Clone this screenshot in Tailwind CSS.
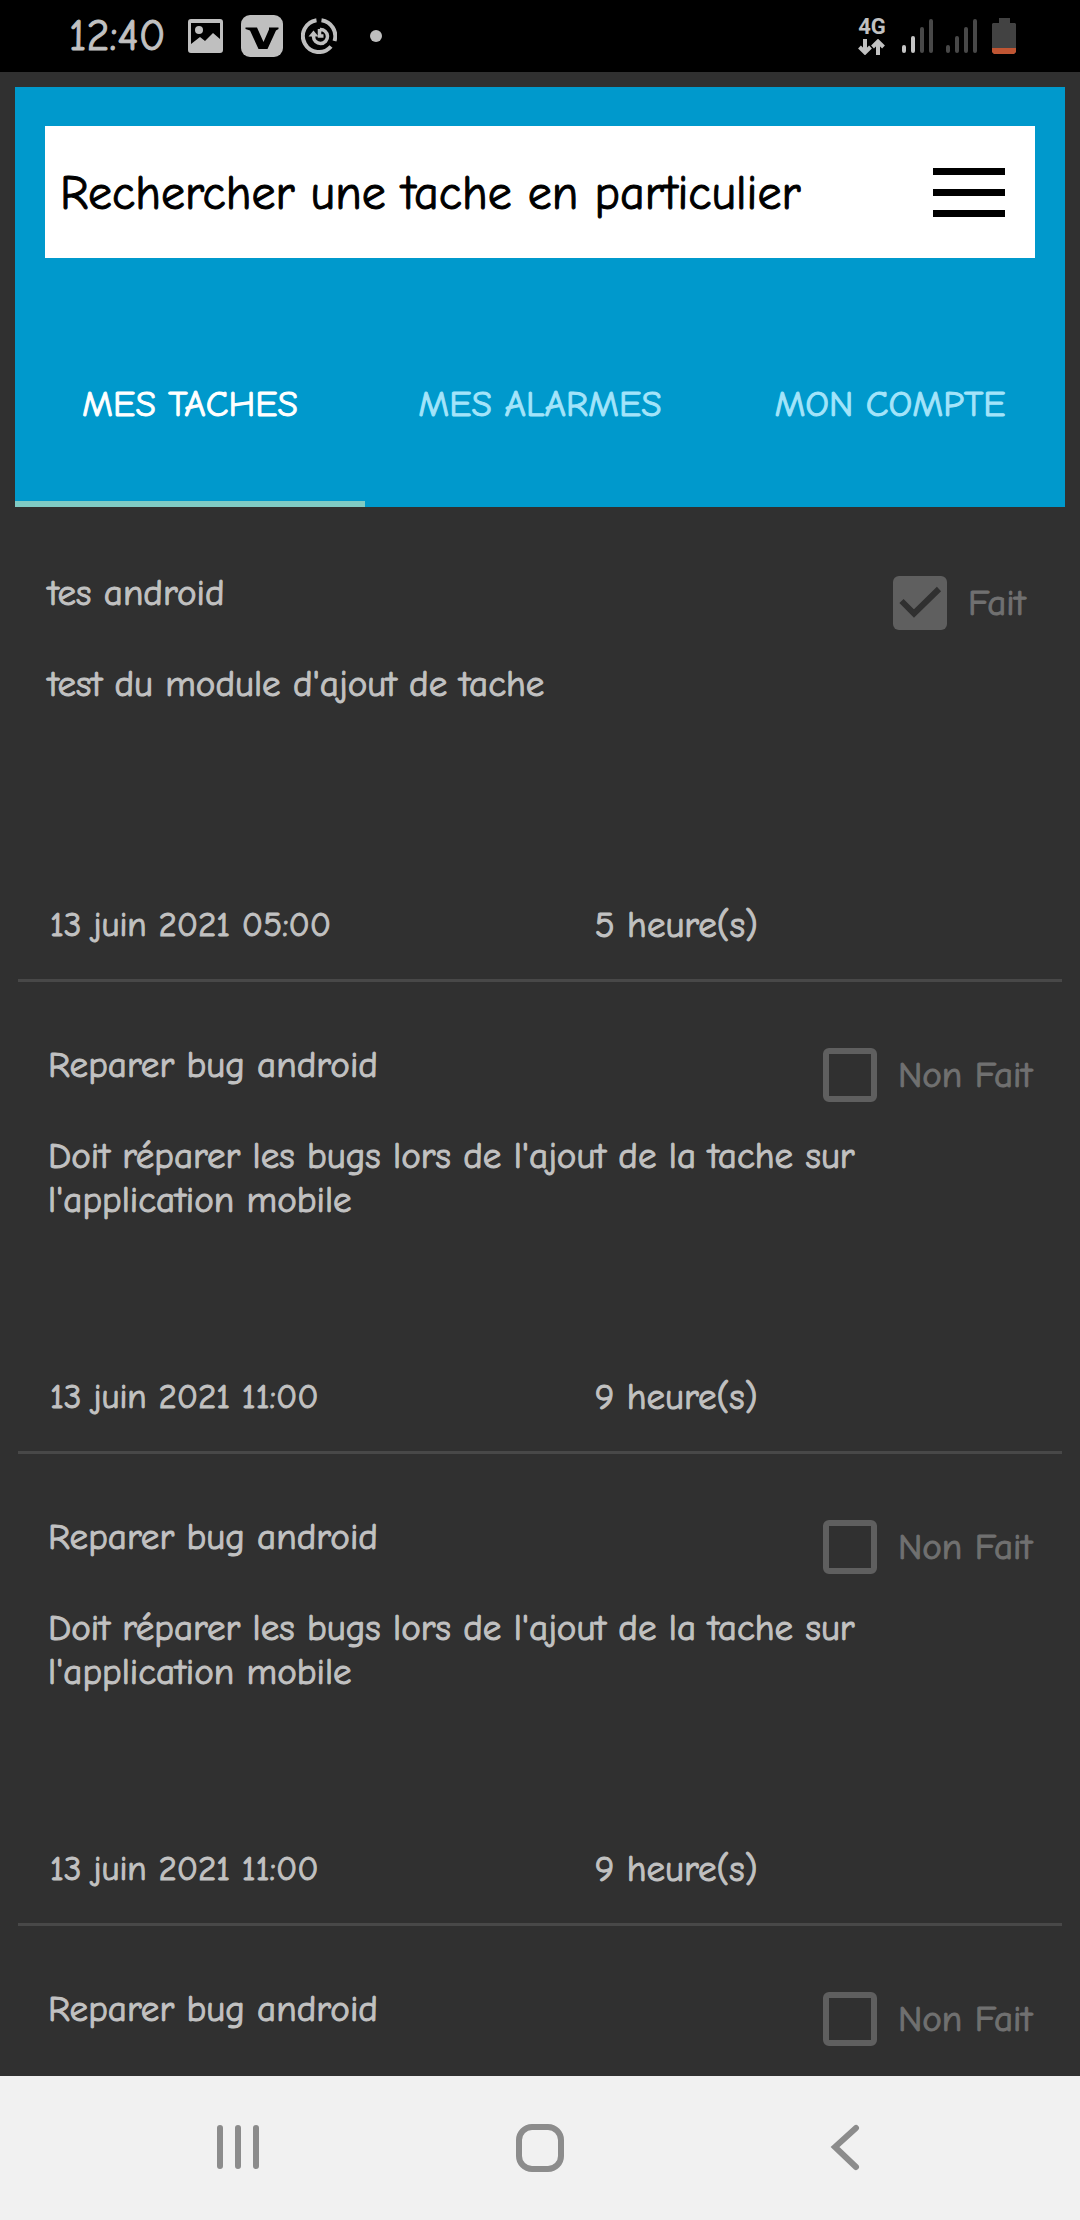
<!DOCTYPE html>
<html lang="fr">
<head>
<meta charset="utf-8">
<meta name="viewport" content="width=device-width, initial-scale=1">
<title>Mes taches</title>
<script src="https://cdn.jsdelivr.net/npm/@tailwindcss/browser@4"></script>
</head>
<body class="flex h-screen flex-col overflow-hidden bg-[#303030] font-['Comic_Neue',Lato,sans-serif] text-[37px] leading-[44px] text-[#c1c1c1] [-webkit-text-stroke-width:1px]">

<!-- Status bar -->
<div class="flex h-[72px] shrink-0 items-center justify-between bg-black pr-16 pl-[69px]">
  <div class="flex items-center">
    <span class="mr-[22px] text-[44px]">12:40</span>
    <svg class="mr-[18px] h-[34px] w-[35px]" viewBox="0 0 35 34"><path fill="#bfbfbf" fill-rule="evenodd" d="M3 0h29a3 3 0 0 1 3 3v28a3 3 0 0 1-3 3H3a3 3 0 0 1-3-3V3a3 3 0 0 1 3-3zM3 4v21l9-7 5 4 8-8 7 6V4z"/><circle cx="11" cy="11" r="4" fill="#bfbfbf"/></svg>
    <svg class="mr-[18px] size-[42px]" viewBox="0 0 42 42"><rect width="42" height="42" rx="9" fill="#bfbfbf"/><path d="M4.500 12.500H16L22.500 27 28 14.500V12.500H37.500V14L35 15.500 26.500 34H17.500L9 15.500 4.500 14z" fill="#000"/></svg>
    <svg class="size-9" viewBox="0 0 36 36" fill="none" stroke="#bfbfbf"><path stroke-width="4" d="M15.500 2.200A16 16 0 1 0 30 28.500M20.500 2.200A16 16 0 0 1 33.500 23"/><path stroke-width="3.500" d="M19 11.500a7 7 0 1 1-6.500 7v-2M18.500 11v7h4"/><path fill="#bfbfbf" stroke="none" d="M7.500 18.500l5-6 5 6z"/></svg>
    <span class="ml-[33px] size-3 rounded-full bg-[#bfbfbf]"></span>
  </div>
  <div class="flex items-center">
    <div class="mr-4 flex flex-col items-center">
      <span class="font-[Roboto] text-[22px] leading-5 font-bold [-webkit-text-stroke-width:0px]">4G</span>
      <svg class="mt-0.5 h-4 w-7" viewBox="0 0 28 16" fill="none" stroke="#c1c1c1" stroke-width="4"><path d="M7 0v13M1.500 8L7 13.500 12.500 8M20 16V3M14.500 8L20 2.500 25.500 8"/></svg>
    </div>
    <svg class="mr-3 h-[34px] w-8" viewBox="0 0 32 34" stroke-width="4" stroke-linecap="round"><path stroke="#c4c4c4" d="M2 28v4M11 19v13"/><path stroke="#484848" d="M20 10v22M29 2v30"/></svg>
    <svg class="mr-3.5 h-[34px] w-8" viewBox="0 0 32 34" stroke="#484848" stroke-width="4" stroke-linecap="round"><path d="M2 28v4M11 19v13M20 10v22M29 2v30"/></svg>
    <svg class="h-9 w-6" viewBox="0 0 24 36"><path fill="#424242" d="M7 0h11v5h5l1 1v28l-2 2H2l-2-2V6l1-1h6z"/><path fill="#bf5533" d="M0 30h24v4l-2 2H2l-2-2z"/></svg>
  </div>
</div>

<!-- Search and tabs -->
<header class="mx-[15px] mt-[15px] shrink-0 bg-[#0099cc] pt-[39px]">
  <form class="mx-[30px] flex h-[132px] items-center bg-white pr-[30px] pl-[15px]">
    <input type="search" aria-label="Rechercher une tache" placeholder="Rechercher une tache en particulier" class="min-w-0 flex-1 pt-1 text-[48px] leading-[60px] text-black outline-none placeholder:text-black">
    <button type="button" aria-label="Menu" class="flex flex-col gap-3.5">
      <span class="h-[7px] w-[72px] bg-black"></span>
      <span class="h-[7px] w-[72px] bg-black"></span>
      <span class="h-[7px] w-[72px] bg-black"></span>
    </button>
  </form>
  <nav class="mt-12 grid grid-cols-3 text-center">
    <a href="#taches" class="flex h-[201px] items-center justify-center border-b-6 border-[#80cbc4] text-white">MES TACHES</a>
    <a href="#alarmes" class="flex h-[201px] items-center justify-center border-b-6 border-transparent text-[#a3e4fa]">MES ALARMES</a>
    <a href="#compte" class="flex h-[201px] items-center justify-center border-b-6 border-transparent text-[#a3e4fa]">MON COMPTE</a>
  </nav>
</header>

<!-- Task list -->
<main class="min-h-0 flex-1 overflow-hidden px-[18px] pt-[3px]">
  <ul class="divide-y-3 divide-[#484848]">
    <li class="px-[30px] pt-[61px] pb-8">
      <div class="flex h-[91px] items-start justify-between">
        <h2>tes android</h2>
        <label class="mt-[5px] flex items-center gap-[21px] text-[#707070]">
          <span class="grid size-[54px]">
            <input type="checkbox" checked disabled class="col-start-1 row-start-1 size-[54px] appearance-none rounded-md bg-[#5f5f5f]">
            <svg class="col-start-1 row-start-1 size-[54px]" viewBox="0 0 54 54" fill="none" stroke="#303030" stroke-width="6"><path d="M8.500 25L21 37.500 46 13"/></svg>
          </span>
          <span class="min-w-16">Fait</span>
        </label>
      </div>
      <p class="min-h-[241px] max-w-[840px]">test du module d'ajout de tache</p>
      <div class="grid grid-cols-[5fr_4fr]"><time class="pl-0.5 text-[35px]">13 juin 2021 05:00</time><span>5 heure(s)</span></div>
    </li>
    <li class="px-[30px] pt-[61px] pb-8">
      <div class="flex h-[91px] items-start justify-between">
        <h2>Reparer bug android</h2>
        <label class="mt-[5px] flex items-center gap-[21px] text-[#707070]">
          <input type="checkbox" disabled class="size-[54px] appearance-none rounded-md border-6 border-[#5f5f5f]">
          <span>Non Fait</span>
        </label>
      </div>
      <p class="min-h-[241px] max-w-[840px]">Doit réparer les bugs lors de l'ajout de la tache sur l'application mobile</p>
      <div class="grid grid-cols-[5fr_4fr]"><time class="pl-0.5 text-[35px]">13 juin 2021 11:00</time><span>9 heure(s)</span></div>
    </li>
    <li class="px-[30px] pt-[61px] pb-8">
      <div class="flex h-[91px] items-start justify-between">
        <h2>Reparer bug android</h2>
        <label class="mt-[5px] flex items-center gap-[21px] text-[#707070]">
          <input type="checkbox" disabled class="size-[54px] appearance-none rounded-md border-6 border-[#5f5f5f]">
          <span>Non Fait</span>
        </label>
      </div>
      <p class="min-h-[241px] max-w-[840px]">Doit réparer les bugs lors de l'ajout de la tache sur l'application mobile</p>
      <div class="grid grid-cols-[5fr_4fr]"><time class="pl-0.5 text-[35px]">13 juin 2021 11:00</time><span>9 heure(s)</span></div>
    </li>
    <li class="px-[30px] pt-[61px]">
      <div class="flex h-[91px] items-start justify-between">
        <h2>Reparer bug android</h2>
        <label class="mt-[5px] flex items-center gap-[21px] text-[#707070]">
          <input type="checkbox" disabled class="size-[54px] appearance-none rounded-md border-6 border-[#5f5f5f]">
          <span>Non Fait</span>
        </label>
      </div>
    </li>
  </ul>
</main>

<!-- System navigation -->
<nav class="flex h-36 shrink-0 items-center justify-between bg-[#f1f1f1] px-[214px]">
  <button type="button" aria-label="Applications récentes"><svg class="size-12" viewBox="0 0 48 48" stroke="#8c8c8c" stroke-width="6" stroke-linecap="round"><path d="M6 4v38M24 4v38M42 4v38"/></svg></button>
  <button type="button" aria-label="Accueil"><svg class="size-12" viewBox="0 0 48 48" fill="none" stroke="#8c8c8c" stroke-width="6"><rect x="3" y="3" width="42" height="42" rx="13"/></svg></button>
  <button type="button" aria-label="Retour"><svg class="size-12" viewBox="0 0 48 48" fill="none" stroke="#8c8c8c" stroke-width="6" stroke-linecap="round"><path d="M38 4L17 23l21 20"/></svg></button>
</nav>
</body>
</html>
